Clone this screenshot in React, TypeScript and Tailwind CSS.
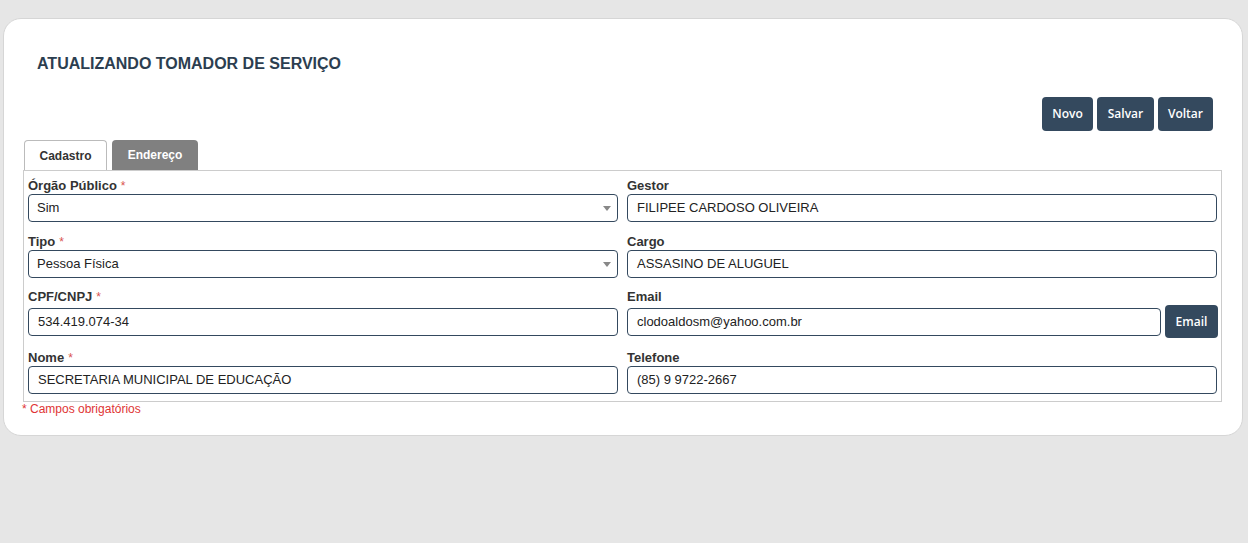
import React from "react";

function Label({ text, required }: { text: string; required?: boolean }) {
  return (
    <div className="h-[16px] leading-[16px] text-[13px] font-bold text-[#333]">
      {text}
      {required && <span className="ml-[4px] text-[12px] font-normal text-[#d9534f]">*</span>}
    </div>
  );
}

function TextInput({ value }: { value: string }) {
  return (
    <div className="flex h-[28px] flex-1 items-center rounded-[4px] border border-[#34495e] bg-white pl-[9px] text-[13px] text-[#222]">
      {value}
    </div>
  );
}

function SelectInput({ value }: { value: string }) {
  return (
    <div className="flex h-[28px] flex-1 items-center justify-between rounded-[4px] border border-[#34495e] bg-white pl-[8px] pr-[6px] text-[13px] text-[#222]">
      <span>{value}</span>
      <span className="h-0 w-0 border-x-[4px] border-t-[5px] border-x-transparent border-t-[#888]" />
    </div>
  );
}

function Field({
  label,
  required,
  children,
  tall,
}: {
  label: string;
  required?: boolean;
  children: React.ReactNode;
  tall?: boolean;
}) {
  return (
    <div className={`flex flex-col ${tall ? "-mt-[1px]" : ""}`}>
      <Label text={label} required={required} />
      <div className={`flex items-center ${tall ? "h-[33px]" : "h-[28px]"}`}>{children}</div>
    </div>
  );
}

export default function App() {
  const btn =
    "h-[34px] rounded-[4px] bg-[#34495e] text-[12px] font-semibold text-white [font-family:'Open_Sans',sans-serif]";

  return (
    <div className="h-[543px] bg-[#e6e6e6] pl-[3px] pr-[5px] pt-[18px] [font-family:'Liberation_Sans',Arial,sans-serif]">
      <div className="h-[418px] rounded-[18px] border border-[#d6d6d6] bg-white">
        <h1 className="pl-[33px] pt-[36px] text-[16px] font-bold leading-[18px] text-[#2c3e50]">
          ATUALIZANDO TOMADOR DE SERVIÇO
        </h1>

        <div className="mr-[29px] mt-[24px] flex justify-end gap-[4px]">
          <button className={`${btn} w-[51px]`}>Novo</button>
          <button className={`${btn} w-[57px]`}>Salvar</button>
          <button className={`${btn} w-[55px]`}>Voltar</button>
        </div>

        <div className="ml-[19px] mr-[20px] mt-[9px]">
          <div className="ml-[1px] flex gap-[5px]">
            <div className="flex h-[30px] w-[83px] items-center justify-center rounded-t-[4px] border border-b-0 border-[#bbb] bg-white text-[12px] font-bold text-[#333]">
              Cadastro
            </div>
            <div className="flex h-[30px] w-[86px] items-center justify-center rounded-t-[4px] bg-[#808080] text-[12px] font-bold text-white">
              Endereço
            </div>
          </div>

          <div className="grid grid-cols-2 gap-x-[9px] gap-y-[12px] border border-[#ccc] px-[4px] pb-[7px] pt-[7px]">
            <Field label="Órgão Público" required>
              <SelectInput value="Sim" />
            </Field>
            <Field label="Gestor">
              <TextInput value="FILIPEE CARDOSO OLIVEIRA" />
            </Field>

            <Field label="Tipo" required>
              <SelectInput value="Pessoa Física" />
            </Field>
            <Field label="Cargo">
              <TextInput value="ASSASINO DE ALUGUEL" />
            </Field>

            <Field label="CPF/CNPJ" required tall>
              <TextInput value="534.419.074-34" />
            </Field>
            <Field label="Email" tall>
              <TextInput value="clodoaldosm@yahoo.com.br" />
              <button className="ml-[4px] mr-[-1px] h-[33px] w-[53px] rounded-[4px] bg-[#34495e] text-[12px] font-semibold text-white [font-family:'Open_Sans',sans-serif]">
                Email
              </button>
            </Field>

            <Field label="Nome" required>
              <TextInput value="SECRETARIA MUNICIPAL DE EDUCAÇÃO" />
            </Field>
            <Field label="Telefone">
              <TextInput value="(85) 9 9722-2667" />
            </Field>
          </div>

          <div className="ml-[-1px] text-[12px] leading-[14px] text-[#e03434]">* Campos obrigatórios</div>
        </div>
      </div>
    </div>
  );
}
